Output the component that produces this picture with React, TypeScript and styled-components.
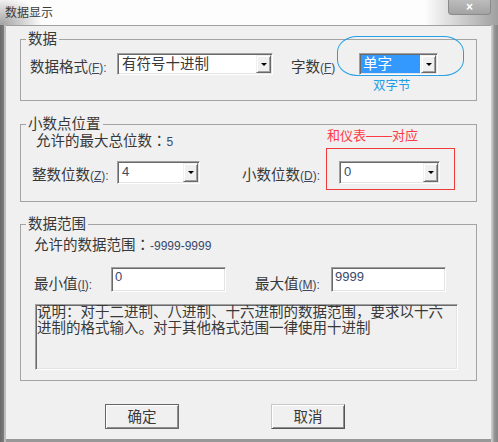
import React from "react";
import styled, { createGlobalStyle, css } from "styled-components";

const GlobalStyle = createGlobalStyle`
  html, body { margin: 0; padding: 0; background: #ffffff; }
  body { font-family: "Liberation Sans", "Noto Sans CJK SC", sans-serif; color: #333; }
  * { box-sizing: border-box; }
`;

const FONT = `"Liberation Sans", "Noto Sans CJK SC", sans-serif`;
const TEXT = "#383838";
const NUM = "#39496b";

const Window = styled.div`
  position: relative;
  width: 498px;
  height: 442px;
  display: flex;
  flex-direction: column;
  overflow: hidden;
  background: #fff;
  font-family: ${FONT};
`;

const TitleBar = styled.div`
  flex: none;
  height: 25px;
  display: flex;
  justify-content: space-between;
  align-items: flex-start;
  background:
    radial-gradient(ellipse 40px 28px at 2px 24px, rgba(105, 105, 105, 0.6), rgba(105, 105, 105, 0) 100%),
    linear-gradient(to right, rgba(255, 255, 255, 0) 425px, rgba(210, 210, 210, 0.7) 448px, rgba(150, 150, 150, 0.9) 498px),
    #fdfdfd;
`;

const Title = styled.div`
  padding: 6px 0 0 5px;
  font-size: 12px;
  line-height: 14px;
  color: #3c3c3c;
`;

const CloseButton = styled.div`
  width: 43px;
  height: 15px;
  margin-right: 7px;
  display: flex;
  align-items: center;
  justify-content: center;
  background: linear-gradient(#bcbcbc, #a3a3a3);
  border: 1px solid #8a8a8a;
  border-top: none;
  border-radius: 0 0 4px 4px;
  color: #fff;
  font-size: 12px;
  font-weight: bold;
  line-height: 1;
`;

const Frame = styled.div`
  flex: 1;
  display: flex;
  padding: 0 7px 3px 6px;
  background:
    linear-gradient(to right, #6a6a6a 0, #7d7d7d 4px, #bdbdbd 4px, #bdbdbd 6px, rgba(0, 0, 0, 0) 6px),
    linear-gradient(to left, #858585 0, #979797 4px, #b8b8b8 5px, #d2d2d2 7px, rgba(0, 0, 0, 0) 7px),
    #989898;
`;

const Client = styled.div`
  flex: 1;
  display: flex;
  flex-direction: column;
  padding: 5px 14px 0 14px;
  background: #f0f0f0;
  border-top: 1px solid #a0a0a0;
`;

const Group = styled.fieldset<{ $gap: number }>`
  margin: ${(p) => p.$gap}px 0 0 0;
  padding: 0;
  min-width: 0;
  border: 1px solid #a3a3a3;
`;

const Legend = styled.legend`
  margin-left: 5px;
  padding: 0 2px;
  font-size: 14.5px;
  line-height: 16px;
  color: ${TEXT};
`;

const GroupBody = styled.div<{ $pt: number; $pb: number }>`
  display: flex;
  flex-direction: column;
  align-items: flex-start;
  padding: ${(p) => p.$pt}px 0 ${(p) => p.$pb}px 0;
`;

const Info = styled.div<{ $left: number; $top: number }>`
  padding: ${(p) => p.$top}px 0 0 ${(p) => p.$left}px;
  font-size: 14.5px;
  line-height: 16px;
  color: ${TEXT};
  white-space: nowrap;
`;

const Colon = styled.span`
  font-family: "Noto Sans CJK TC", "Noto Sans CJK SC", sans-serif;
`;

const Num = styled.span`
  font-size: 12px;
  color: ${NUM};
`;

const Row = styled.div<{ $left: number; $top: number }>`
  display: flex;
  align-items: flex-start;
  padding: ${(p) => p.$top}px 0 0 ${(p) => p.$left}px;
`;

const Label = styled.span<{ $w: number; $dy: number }>`
  flex: none;
  width: ${(p) => p.$w}px;
  padding-top: ${(p) => p.$dy}px;
  font-size: 14.5px;
  line-height: 16px;
  color: ${TEXT};
  white-space: nowrap;
`;

const Hot = styled.span`
  font-size: 12px;
  color: #3d4660;
  u {
    text-underline-offset: 1px;
  }
`;

const Spacer = styled.span<{ $w: number }>`
  flex: none;
  width: ${(p) => p.$w}px;
`;

const sunken = css`
  border: 1px solid;
  border-color: #a0a0a0 #ffffff #ffffff #a0a0a0;
  box-shadow: inset 1px 1px 0 #696969, inset -1px -1px 0 #e3e3e3;
`;

const Combo = styled.div<{ $w: number; $h: number }>`
  ${sunken}
  flex: none;
  width: ${(p) => p.$w}px;
  height: ${(p) => p.$h}px;
  padding: 1px;
  display: flex;
  background: #fff;
`;

const ComboValue = styled.div<{ $selected?: boolean; $latin?: boolean }>`
  flex: 1;
  margin-right: ${(p) => (p.$selected ? 1 : 0)}px;
  padding-left: ${(p) => (p.$selected ? 2 : 3)}px;
  font-size: ${(p) => (p.$latin ? 13 : 14.5)}px;
  line-height: 18px;
  white-space: nowrap;
  overflow: hidden;
  color: ${(p) => (p.$selected ? "#ffffff" : p.$latin ? NUM : TEXT)};
  background: ${(p) => (p.$selected ? "#3399ff" : "transparent")};
`;

const DropButton = styled.div`
  flex: none;
  width: 15px;
  display: flex;
  align-items: center;
  justify-content: center;
  background: #f0f0f0;
  border: 1px solid;
  border-color: #f0f0f0 #696969 #696969 #f0f0f0;
  box-shadow: inset 1px 1px 0 #ffffff, inset -1px -1px 0 #a0a0a0;
  &::after {
    content: "";
    border-left: 3px solid transparent;
    border-right: 3px solid transparent;
    border-top: 3px solid #000;
  }
`;

const Edit = styled.div<{ $w: number }>`
  ${sunken}
  flex: none;
  width: ${(p) => p.$w}px;
  height: 25px;
  padding: 1px 0 0 3px;
  background: #fff;
  font-size: 13px;
  line-height: 15px;
  color: ${NUM};
`;

const Desc = styled.div`
  ${sunken}
  margin: 11px 0 0 14px;
  width: 423px;
  height: 66px;
  padding: 0 0 0 1px;
  background: #f0f0f0;
  font-size: 14.5px;
  line-height: 15.5px;
  color: ${TEXT};
  white-space: nowrap;
  overflow: hidden;
`;

const ButtonRow = styled.div`
  display: flex;
  gap: 92px;
  margin: 23px 0 0 85px;
`;

const Button = styled.button<{ $default?: boolean }>`
  width: 74px;
  height: 25px;
  margin: 0;
  padding: 0;
  display: flex;
  align-items: center;
  justify-content: center;
  font-family: ${FONT};
  font-size: 14.5px;
  line-height: 16px;
  color: ${TEXT};
  background: #f0f0f0;
  border: 1px solid;
  border-color: ${(p) => (p.$default ? "#666666" : "#c8c8c8 #555555 #555555 #c8c8c8")};
  box-shadow: inset 1px 1px 0 #ffffff, inset -1px -1px 0 #8f8f8f;
`;

const BlueRing = styled.div`
  position: absolute;
  left: 337px;
  top: 36px;
  width: 127px;
  height: 40px;
  border: 1px solid #27a0e4;
  border-radius: 20px / 16px;
  pointer-events: none;
`;

const BlueNote = styled.div`
  position: absolute;
  left: 373px;
  top: 79px;
  font-size: 12.5px;
  line-height: 14px;
  color: #1f9de6;
  white-space: nowrap;
`;

const RedNote = styled.div`
  position: absolute;
  left: 327px;
  top: 129px;
  font-size: 13px;
  line-height: 14px;
  color: #ff3a44;
  white-space: nowrap;
`;

const RedBox = styled.div`
  position: absolute;
  left: 326px;
  top: 148px;
  width: 129px;
  height: 42px;
  border: 1px solid #f03a3a;
  pointer-events: none;
`;

const Key = ({ k, colon = true }: { k: string; colon?: boolean }) => (
  <Hot>
    (<u>{k}</u>){colon ? ":" : ""}
  </Hot>
);

export default function App() {
  return (
    <Window>
      <GlobalStyle />
      <TitleBar>
        <Title>数据显示</Title>
        <CloseButton>×</CloseButton>
      </TitleBar>
      <Frame>
        <Client>
          <Group $gap={0}>
            <Legend>数据</Legend>
            <GroupBody $pt={6} $pb={24}>
              <Row $left={9} $top={0}>
                <Label $w={87} $dy={6}>
                  数据格式<Key k="F" />
                </Label>
                <Combo $w={156} $h={22}>
                  <ComboValue>有符号十进制</ComboValue>
                  <DropButton />
                </Combo>
                <Spacer $w={18} />
                <Label $w={68} $dy={6}>
                  字数<Key k="F" colon={false} />
                </Label>
                <Combo $w={79} $h={22}>
                  <ComboValue $selected>单字</ComboValue>
                  <DropButton />
                </Combo>
              </Row>
            </GroupBody>
          </Group>

          <Group $gap={15}>
            <Legend>小数点位置</Legend>
            <GroupBody $pt={0} $pb={17}>
              <Info $left={15} $top={0}>
                允许的最大总位数<Colon>：</Colon>
                <Num>5</Num>
              </Info>
              <Row $left={11} $top={11}>
                <Label $w={85} $dy={6}>
                  整数位数<Key k="Z" />
                </Label>
                <Combo $w={83} $h={23}>
                  <ComboValue $latin>4</ComboValue>
                  <DropButton />
                </Combo>
                <Spacer $w={42} />
                <Label $w={97} $dy={6}>
                  小数位数<Key k="D" />
                </Label>
                <Combo $w={101} $h={23}>
                  <ComboValue $latin>0</ComboValue>
                  <DropButton />
                </Combo>
              </Row>
            </GroupBody>
          </Group>

          <Group $gap={14}>
            <Legend>数据范围</Legend>
            <GroupBody $pt={4} $pb={10}>
              <Info $left={13} $top={0}>
                允许的数据范围<Colon>：</Colon>
                <Num>-9999-9999</Num>
              </Info>
              <Row $left={13} $top={13}>
                <Label $w={77} $dy={9}>
                  最小值<Key k="I" />
                </Label>
                <Edit $w={115}>0</Edit>
                <Spacer $w={29} />
                <Label $w={76} $dy={9}>
                  最大值<Key k="M" />
                </Label>
                <Edit $w={115}>9999</Edit>
              </Row>
              <Desc>
                说明：对于二进制、八进制、十六进制的数据范围，要求以十六
                <br />
                进制的格式输入。对于其他格式范围一律使用十进制
              </Desc>
            </GroupBody>
          </Group>

          <ButtonRow>
            <Button $default>确定</Button>
            <Button>取消</Button>
          </ButtonRow>
        </Client>
      </Frame>

      <BlueRing />
      <BlueNote>双字节</BlueNote>
      <RedNote>和仪表——对应</RedNote>
      <RedBox />
    </Window>
  );
}
